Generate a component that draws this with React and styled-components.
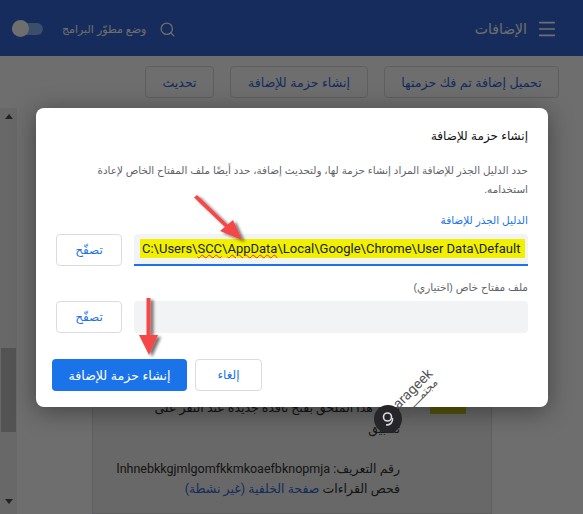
import React from 'react';
import styled, { createGlobalStyle } from 'styled-components';
import { Menu, Search } from 'lucide-react';

const arabic = `Arial, "Liberation Sans", "DejaVu Sans", "Noto Sans", sans-serif`;

const Global = createGlobalStyle`
  html, body { margin: 0; padding: 0; height: 514px; overflow: hidden; }
  body { font-family: ${arabic}; background: #fff; }
  * { box-sizing: border-box; }
`;

const Page = styled.div`
  position: relative;
  width: 583px;
  height: 514px;
  overflow: hidden;
  display: flex;
  flex-direction: column;
  direction: rtl;
`;

const Header = styled.header`
  height: 56px;
  flex: none;
  background: #3367d6;
  color: #fff;
  display: flex;
  align-items: center;
  padding: 2px 25px 0 12px;
`;

const Title = styled.h1`
  margin: 0 9px 0 0;
  font-size: 14px;
  font-weight: 400;
`;

const HeaderTools = styled.div`
  margin-right: auto;
  display: flex;
  align-items: center;
`;

const DevLabel = styled.span`
  font-size: 11px;
  margin: 0 13px 0 19px;
`;

const Toggle = styled.div`
  width: 31px;
  height: 12px;
  border-radius: 6px;
  background: #8ab4f8;
  position: relative;
`;

const Knob = styled.span`
  position: absolute;
  left: 0;
  top: -3px;
  width: 17px;
  height: 17px;
  border-radius: 50%;
  background: #fff;
`;

const Toolbar = styled.div`
  height: 52px;
  flex: none;
  background: #fff;
  display: flex;
  gap: 16px;
  padding: 10px 24px 0 0;
`;

const ToolButton = styled.button`
  width: ${p => p.$w}px;
  height: 32px;
  padding: 0;
  border: 1px solid #dadce0;
  border-radius: 4px;
  background: #fff;
  color: #3367d6;
  font: 12.6px ${arabic};
  white-space: nowrap;
`;

const Body = styled.div`
  flex: 1;
  display: flex;
  direction: ltr;
  min-height: 0;
`;

const Scrollbar = styled.div`
  width: 17px;
  flex: none;
  background: #f1f1f1;
  display: flex;
  flex-direction: column;
  align-items: center;
  padding-top: 6px;
`;

const ArrowUp = styled.span`
  width: 0;
  height: 0;
  border: 4px solid transparent;
  border-top: 0;
  border-bottom: 5px solid #505050;
`;

const ArrowDown = styled.span`
  width: 0;
  height: 0;
  border: 4px solid transparent;
  border-bottom: 0;
  border-top: 5px solid #505050;
  margin-top: 67px;
`;

const Thumb = styled.div`
  width: 15px;
  height: 84px;
  margin-top: 229px;
  background: #c1c1c1;
`;

const Content = styled.main`
  flex: 1;
  display: flex;
  padding-left: 75px;
`;

const Card = styled.section`
  width: 400px;
  background: #f0f0f0;
  border: 1px solid #dadce0;
  direction: rtl;
  padding: 288px 25px 0 0;
  color: #333;
  font-size: 12.5px;
  display: flex;
  gap: 30px;
  font-family: Roboto, ${arabic};
`;

const Thumbnail = styled.div`
  width: 36px;
  height: 17px;
  flex: none;
  background: #c9c81a;
`;

const CardText = styled.div`
  width: 282px;
`;

const Blurb = styled.p`
  margin: 0 0 20px;
  line-height: 21px;
  white-space: nowrap;
`;

const InfoLine = styled.p`
  margin: 0;
  line-height: 20px;
  white-space: nowrap;
`;

const Link = styled.span`
  color: #3367d6;
`;

const Overlay = styled.div`
  position: absolute;
  inset: 0;
  background: rgba(0, 0, 0, 0.57);
  padding: 108px 35px 0 36px;
`;

const Modal = styled.div`
  width: 512px;
  height: 299px;
  background: #fff;
  border-radius: 8px;
  box-shadow: 0 4px 24px rgba(0, 0, 0, 0.4);
  padding: 20px 20px 16px 16px;
  display: flex;
  flex-direction: column;
`;

const ModalTitle = styled.h2`
  margin: 0;
  font-size: 12px;
  line-height: 16px;
  font-weight: 400;
  color: #111;
`;

const Desc = styled.p`
  margin: 17px 0 0;
  font-size: 10.4px;
  line-height: 19px;
  color: #5f6368;
`;

const Field = styled.div`
  margin-top: ${p => p.$top}px;
  padding-left: 4px;
`;

const Label = styled.label`
  display: block;
  font-size: 10.5px;
  line-height: 14px;
  margin-bottom: 7px;
  color: ${p => (p.$active ? '#1a73e8' : '#5f6368')};
`;

const Row = styled.div`
  display: flex;
  gap: 12px;
`;

const Browse = styled.button`
  width: 66px;
  height: 32px;
  flex: none;
  border: 1px solid #dadce0;
  border-radius: 4px;
  background: #fff;
  color: #1a73e8;
  font: 12px ${arabic};
  padding: 0;
`;

const PathInput = styled.div`
  flex: 1;
  min-width: 0;
  height: 32px;
  background: #f1f3f4;
  border-bottom: ${p => (p.$focused ? '2px solid #1a73e8' : '0')};
  border-radius: ${p => (p.$focused ? '4px 4px 0 0' : '4px')};
  direction: ltr;
  padding: 5px 3px 0 6px;
`;

const Highlight = styled.div`
  height: 19px;
  background: #f0f000;
  font: 13px/19px Roboto, sans-serif;
  color: #202124;
  padding-left: 2px;
  white-space: nowrap;
`;

const Typo = styled.span`
  text-decoration: underline wavy #e53935 1px;
`;

const Footer = styled.div`
  margin-top: auto;
  display: flex;
  justify-content: flex-end;
  gap: 8px;
`;

const Cancel = styled.button`
  width: 67px;
  height: 32px;
  border: 1px solid #dadce0;
  border-radius: 4px;
  background: #fff;
  color: #1a73e8;
  font: 12px ${arabic};
  padding: 0;
`;

const Primary = styled.button`
  width: 135px;
  height: 32px;
  border: 0;
  border-radius: 4px;
  background: #1a73e8;
  color: #fff;
  font: 12.6px ${arabic};
  padding: 0;
`;

const Annotations = styled.svg`
  position: absolute;
  left: 0;
  top: 0;
  pointer-events: none;
`;

const Badge = styled.div`
  position: absolute;
  left: 374px;
  top: 405px;
  width: 28px;
  height: 28px;
  border-radius: 50%;
  background: #26262a;
  display: flex;
  align-items: center;
  justify-content: center;
`;

const Mark = styled.div`
  position: absolute;
  transform: rotate(-45deg);
  transform-origin: left center;
  color: #555;
  white-space: nowrap;
  direction: ltr;
`;

const BrandName = styled(Mark)`
  left: 395px;
  top: 398px;
  font: 14px Roboto, sans-serif;
`;

const BrandArabic = styled(Mark)`
  left: 402px;
  top: 408px;
  font: 11px ${arabic};
  direction: rtl;
`;

export default function App() {
  return (
    <>
      <Global />
      <Page>
        <Header>
          <Menu size={22} strokeWidth={1.8} />
          <Title>الإضافات</Title>
          <HeaderTools>
            <Search size={17} strokeWidth={1.8} />
            <DevLabel>وضع مطوّر البرامج</DevLabel>
            <Toggle><Knob /></Toggle>
          </HeaderTools>
        </Header>
        <Toolbar>
          <ToolButton $w={175}>تحميل إضافة تم فك حزمتها</ToolButton>
          <ToolButton $w={138}>إنشاء حزمة للإضافة</ToolButton>
          <ToolButton $w={69}>تحديث</ToolButton>
        </Toolbar>
        <Body>
          <Scrollbar>
            <ArrowUp />
            <Thumb />
            <ArrowDown />
          </Scrollbar>
          <Content>
            <Card>
              <Thumbnail />
              <CardText>
                <Blurb>يقوم هذا الملحق بفتح نافذة جديدة عند النقر على<br />تطبيق</Blurb>
                <InfoLine>رقم التعريف: lnhnebkkgjmlgomfkkmkoaefbknopmja</InfoLine>
                <InfoLine>فحص القراءات <Link>صفحة الخلفية (غير نشطة)</Link></InfoLine>
              </CardText>
            </Card>
          </Content>
        </Body>
        <Overlay>
          <Modal>
            <ModalTitle>إنشاء حزمة للإضافة</ModalTitle>
            <Desc>حدد الدليل الجذر للإضافة المراد إنشاء حزمة لها، ولتحديث إضافة، حدد أيضًا ملف المفتاح الخاص لإعادة استخدامه.</Desc>
            <Field $top={14}>
              <Label $active>الدليل الجذر للإضافة</Label>
              <Row>
                <PathInput $focused>
                  <Highlight>C:\Users\<Typo>SCC</Typo>\<Typo>AppData</Typo>\Local\Google\Chrome\User Data\Default</Highlight>
                </PathInput>
                <Browse>تصفّح</Browse>
              </Row>
            </Field>
            <Field $top={14}>
              <Label>ملف مفتاح خاص (اختياري)</Label>
              <Row>
                <PathInput />
                <Browse>تصفّح</Browse>
              </Row>
            </Field>
            <Footer>
              <Cancel>إلغاء</Cancel>
              <Primary>إنشاء حزمة للإضافة</Primary>
            </Footer>
          </Modal>
        </Overlay>
        <Annotations width="583" height="514">
          <defs>
            <filter id="arrowShadow" x="-30%" y="-30%" width="170%" height="170%">
              <feDropShadow dx="3" dy="2" stdDeviation="1.5" floodColor="#000" floodOpacity="0.55" />
            </filter>
          </defs>
          <g filter="url(#arrowShadow)" fill="#f44646">
            <path d="M197 195 L228 225 L225.5 227.5 L194 197.5 Z" />
            <path d="M242 240 L220 231 L233 220 Z" />
            <path d="M146.5 298 H150.5 V336 H146.5 Z" />
            <path d="M139 335 H158 L149 355 Z" />
          </g>
        </Annotations>
        <Badge>
          <svg width="20" height="20" viewBox="0 0 20 20" fill="none" stroke="#ddd" strokeWidth="1.6">
            <circle cx="9.5" cy="8" r="4" />
            <path d="M14.5 9 C15 14 12 16 8 16" />
          </svg>
        </Badge>
        <BrandName>arageek</BrandName>
        <BrandArabic>مجتمــــــع</BrandArabic>
      </Page>
    </>
  );
}
